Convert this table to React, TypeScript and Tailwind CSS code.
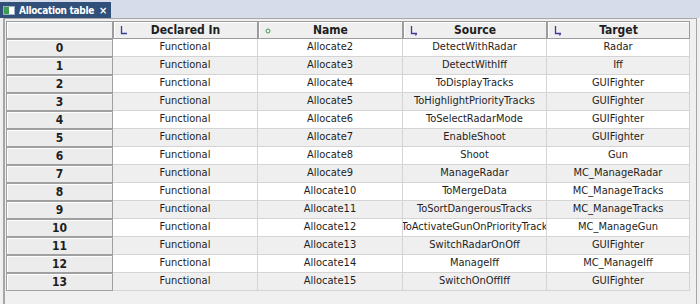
import React from "react";

const rows: [string, string, string, string][] = [
  ["Functional", "Allocate2", "DetectWithRadar", "Radar"],
  ["Functional", "Allocate3", "DetectWithIff", "Iff"],
  ["Functional", "Allocate4", "ToDisplayTracks", "GUIFighter"],
  ["Functional", "Allocate5", "ToHighlightPriorityTracks", "GUIFighter"],
  ["Functional", "Allocate6", "ToSelectRadarMode", "GUIFighter"],
  ["Functional", "Allocate7", "EnableShoot", "GUIFighter"],
  ["Functional", "Allocate8", "Shoot", "Gun"],
  ["Functional", "Allocate9", "ManageRadar", "MC_ManageRadar"],
  ["Functional", "Allocate10", "ToMergeData", "MC_ManageTracks"],
  ["Functional", "Allocate11", "ToSortDangerousTracks", "MC_ManageTracks"],
  ["Functional", "Allocate12", "ToActivateGunOnPriorityTrack", "MC_ManageGun"],
  ["Functional", "Allocate13", "SwitchRadarOnOff", "GUIFighter"],
  ["Functional", "Allocate14", "ManageIff", "MC_ManageIff"],
  ["Functional", "Allocate15", "SwitchOnOffIff", "GUIFighter"],
];

const font = { fontFamily: "Tahoma, 'DejaVu Sans Condensed', 'Liberation Sans', sans-serif" };

const LinkIcon = ({ hook }: { hook?: boolean }) => (
  <svg width="9" height="11" viewBox="0 0 9 11" className="absolute left-[6px] top-[3px]">
    <path d="M1.5 1 V8.5 H7" fill="none" stroke="#3b3b9c" strokeWidth="1.3" />
    {hook && <path d="M6.5 8.5 L5.5 10.5" fill="none" stroke="#3b3b9c" strokeWidth="1.2" />}
  </svg>
);

const HeadCell = ({ children, icon }: { children: React.ReactNode; icon?: React.ReactNode }) => (
  <div className="relative h-[18px] flex items-center justify-center bg-[#efefef] border border-[#9c9c9c] shadow-[inset_1px_1px_0_#ffffff] text-[12px] font-semibold text-[#1e1e1e]">
    {icon}
    {children}
  </div>
);

export default function App() {
  return (
    <div className="w-[700px] h-[304px] bg-[#f0f0f0] overflow-hidden" style={font}>
      <div className="h-[18px] bg-[#d7dcea] flex items-end">
        <div className="h-[16px] w-[111px] bg-[#30507a] flex items-center gap-[4px] pl-[3px] text-white text-[10px] font-bold tracking-[-0.3px] whitespace-nowrap">
          <div className="w-[12px] h-[9px] bg-white border border-[#9fb0c8] flex">
            <div className="w-[5px] h-full bg-[#3f9a52]" />
          </div>
          <span>Allocation table</span>
          <span className="ml-[1px] text-[11px] leading-none">×</span>
        </div>
      </div>
      <div className="h-[286px] mx-[3px] border-l-2 border-r border-t border-[#a6a6a6] bg-[#f0f0f0] pt-[2px] pl-[1px]">
        <div className="grid grid-cols-[107px_145px_145px_144px_143px] text-[11px] text-[#1e1e1e]">
          <HeadCell>{""}</HeadCell>
          <HeadCell icon={<LinkIcon />}>Declared In</HeadCell>
          <HeadCell
            icon={
              <svg width="6" height="6" viewBox="0 0 6 6" className="absolute left-[6px] top-[6px]">
                <circle cx="3" cy="3" r="2" fill="none" stroke="#3f9a52" strokeWidth="1" />
              </svg>
            }
          >
            Name
          </HeadCell>
          <HeadCell icon={<LinkIcon hook />}>Source</HeadCell>
          <HeadCell icon={<LinkIcon hook />}>Target</HeadCell>
          {rows.map((r, i) => {
            const bg = i % 2 === 0 ? "bg-white" : "bg-[#efefef]";
            return (
              <React.Fragment key={i}>
                <div className="h-[18px] flex items-center justify-center bg-[#ececec] border border-[#a0a0a0] shadow-[inset_1px_1px_0_#ffffff] font-semibold text-[12px]">
                  {i}
                </div>
                {r.map((c, j) => (
                  <div
                    key={j}
                    className={`h-[18px] flex items-center justify-center whitespace-nowrap overflow-hidden border-r border-b border-[#d4d4d4] ${bg}`}
                  >
                    {c}
                  </div>
                ))}
              </React.Fragment>
            );
          })}
        </div>
      </div>
    </div>
  );
}
